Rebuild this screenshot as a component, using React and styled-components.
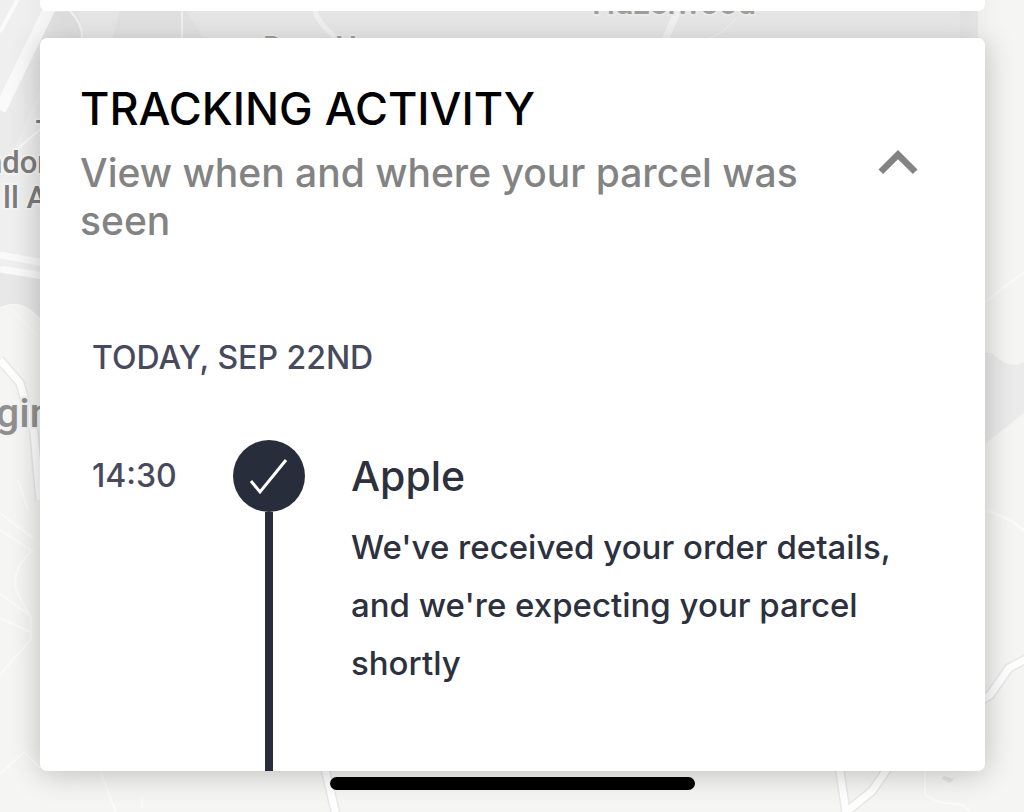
import React, { useState } from "react";
import styled, { createGlobalStyle } from "styled-components";

const GlobalStyle = createGlobalStyle`
  * {
    box-sizing: border-box;
  }
  body {
    margin: 0;
    background: #f4f4f2;
    font-family: Inter, "Noto Sans", sans-serif;
    font-weight: 500;
  }
`;

const Page = styled.div`
  position: relative;
  display: flex;
  flex-direction: column;
  min-height: 100vh;
  overflow: hidden;
`;

// map sits behind everything
const MapCanvas = styled.svg`
  position: absolute;
  inset: 0;
  z-index: -1;
  width: 100%;
  height: 100%;
`;

const MapLabel = styled.text`
  font-family: Roboto, "Noto Sans", sans-serif;
  font-size: ${(props) => props.$size}px;
  font-weight: 500;
  fill: ${(props) => props.$color || "#7c7c7c"};
  stroke: #f4f4f2;
  stroke-width: 4px;
  paint-order: stroke;
`;

const Card = styled.section`
  margin: 0 39px 0 40px;
  border-radius: 7px;
  background: #fff;
  box-shadow: 0 2px 30px rgba(0, 0, 0, 0.24);
`;

const PreviousCard = styled(Card)`
  height: 11px;
  margin-bottom: 27px;
  border-radius: 0 0 7px 7px;
  box-shadow: 0 2px 24px rgba(0, 0, 0, 0.12);
`;

const TrackingCard = styled(Card)`
  padding-top: 43px;
`;

const CardHeader = styled.header`
  display: flex;
  align-items: center;
  padding: 0 48px 0 40px;
`;

const Headings = styled.div`
  flex: 1;
`;

const Title = styled.h2`
  margin: 0;
  color: #000;
  font-size: 45px;
  font-weight: 500;
  line-height: 56px;
  text-transform: uppercase;
`;

const Subtitle = styled.p`
  margin: 12px 0 0;
  color: #838383;
  font-size: 39px;
  line-height: 48px;
`;

const ToggleButton = styled.button`
  flex: none;
  display: flex;
  padding: 0;
  border: 0;
  background: none;
  cursor: pointer;
  svg {
    width: 78px;
    height: 78px;
    fill: #838383;
    transform: ${(props) => (props.$open ? "none" : "rotate(180deg)")};
  }
`;

const Activity = styled.div`
  padding: 93px 60px 0 52px;
`;

const DateHeading = styled.h3`
  margin: 0 0 62px;
  color: #474a5c;
  font-size: 32px;
  font-weight: 500;
  line-height: 40px;
  text-transform: uppercase;
`;

const Events = styled.ol`
  margin: 0;
  padding: 0;
  list-style: none;
`;

const Event = styled.li`
  display: grid;
  grid-template-columns: 141px 72px 1fr;
`;

const Time = styled.time`
  color: #474a5c;
  font-size: 32px;
  line-height: 72px;
`;

const Track = styled.div`
  display: flex;
  flex-direction: column;
  align-items: center;
`;

const Marker = styled.div`
  width: 72px;
  height: 72px;
  border-radius: 50%;
  background: #272d3a;
`;

const Line = styled.div`
  flex: 1;
  width: 8px;
  background: #272d3a;
`;

const Details = styled.div`
  padding: 0 0 79px 46px;
  color: #2d313d;
`;

const Sender = styled.h4`
  margin: 0 0 6px;
  font-size: 41px;
  font-weight: 500;
  line-height: 72px;
`;

const Message = styled.p`
  margin: 0;
  font-size: 33px;
  line-height: 58px;
`;

const HomeIndicator = styled.div`
  width: 365px;
  max-width: 60%;
  height: 13px;
  margin: 6px auto 22px;
  border-radius: 7px;
  background: #000;
`;

const events = [
  {
    time: "14:30",
    sender: "Apple",
    message:
      "We've received your order details, and we're expecting your parcel shortly",
  },
];

const MapBackground = () => (
  <MapCanvas viewBox="0 0 1024 812" preserveAspectRatio="xMidYMid slice">
    <rect width="1024" height="812" fill="#f5f5f3" />

    {/* built up areas */}
    <path d="M0 0H978V60H60V305L36 306Q18 298 0 308Z" fill="#efefef" />
    <path d="M52 12L78 12L83 40H40V90L0 180V110Z" fill="#ebebeb" />
    <path d="M120 10H185L205 40H112Z" fill="#eaeaea" />
    <path d="M55 12H70Q82 24 82 40H40Z" fill="#e6e6e6" />
    <path d="M0 265L40 275V318Q20 297 0 308Z" fill="#e8e8e8" />
    <path d="M960 0H978V50H960Z" fill="#ebebeb" />
    <path d="M980 353H992Q1010 371 1024 362V413L980 448Z" fill="#ebebeb" />

    {/* roads */}
    <g fill="none" stroke="#fafafa">
      <path d="M20 -5L0 32" strokeWidth="4" />
      <path d="M56 -5L0 110" strokeWidth="12" />
      <path d="M0 255L50 264M0 269L50 277" strokeWidth="7" />
      <path d="M18 148L42 128" strokeWidth="2" />
      <path d="M70 11Q83 24 82 40M182 11V40" strokeWidth="2" />
      <path d="M315 10Q318 25 342 42" strokeWidth="5" />
      <path d="M679 8L664 42" strokeWidth="7" />
      <path d="M736 18Q724 34 705 40" strokeWidth="1" />
      <path d="M0 308Q22 296 42 322M10 308L42 340" strokeWidth="1" />
      <path d="M980 306L1024 272" strokeWidth="2" />
      <path d="M980 509Q1012 516 1028 535" strokeWidth="3" />
      <path
        d="M18 480L28 510M0 513L33 538M0 530L32 551Q6 575 20 598L32 620M0 594L31 616V640Q16 655 0 675M0 618L30 632M0 774L24 752L40 768M100 771L116 812M142 798V808M925 771V794L938 802L963 805L970 812"
        strokeWidth="2"
      />
    </g>
    <g fill="none" strokeLinejoin="round">
      <path
        d="M0 360L20 383L34 432L40 500M325 768L336 815M982 700L990 695L1009 668L1028 658M839 765L846 812L872 791L890 765"
        stroke="#e8e8e8"
        strokeWidth="10"
      />
      <path
        d="M0 360L20 383L34 432L40 500M325 768L336 815M982 700L990 695L1009 668L1028 658M839 765L846 812L872 791L890 765"
        stroke="#fff"
        strokeWidth="7"
      />
    </g>
    <path d="M944 776L954 779L950 783L942 779Z" fill="#e3e3e3" />

    <MapLabel x="-15" y="173" $size="31">ndon</MapLabel>
    <MapLabel x="3" y="208" $size="31">ll A</MapLabel>
    <MapLabel x="35" y="131" $size="31">-</MapLabel>
    <MapLabel x="-4" y="427" $size="41" $color="#909090">gin</MapLabel>
    <MapLabel x="592" y="14" $size="33" $color="#a5a5a5">Hazelwood</MapLabel>
    <MapLabel x="263" y="58" $size="31" $color="#a5a5a5">Deer Has</MapLabel>
  </MapCanvas>
);

const App = () => {
  const [open, setOpen] = useState(true);

  return (
    <Page>
      <GlobalStyle />
      <MapBackground />
      <PreviousCard />
      <TrackingCard>
        <CardHeader>
          <Headings>
            <Title>Tracking activity</Title>
            <Subtitle>View when and where your parcel was seen</Subtitle>
          </Headings>
          <ToggleButton
            type="button"
            aria-label="Toggle tracking activity"
            aria-expanded={open}
            $open={open}
            onClick={() => setOpen(!open)}
          >
            <svg viewBox="0 0 24 24">
              <path d="M12 8l-6 6 1.41 1.41L12 10.83l4.59 4.58L18 14z" />
            </svg>
          </ToggleButton>
        </CardHeader>

        {open && (
          <Activity>
            <DateHeading>Today, Sep 22nd</DateHeading>
            <Events>
              {events.map((event) => (
                <Event key={event.time}>
                  <Time>{event.time}</Time>
                  <Track>
                    <Marker>
                      <svg width="72" height="72" viewBox="0 0 72 72">
                        <path
                          d="M18 41L27 52L53 20"
                          fill="none"
                          stroke="#fff"
                          strokeWidth="3"
                        />
                      </svg>
                    </Marker>
                    <Line />
                  </Track>
                  <Details>
                    <Sender>{event.sender}</Sender>
                    <Message>{event.message}</Message>
                  </Details>
                </Event>
              ))}
            </Events>
          </Activity>
        )}
      </TrackingCard>
      <HomeIndicator />
    </Page>
  );
};

export default App;
